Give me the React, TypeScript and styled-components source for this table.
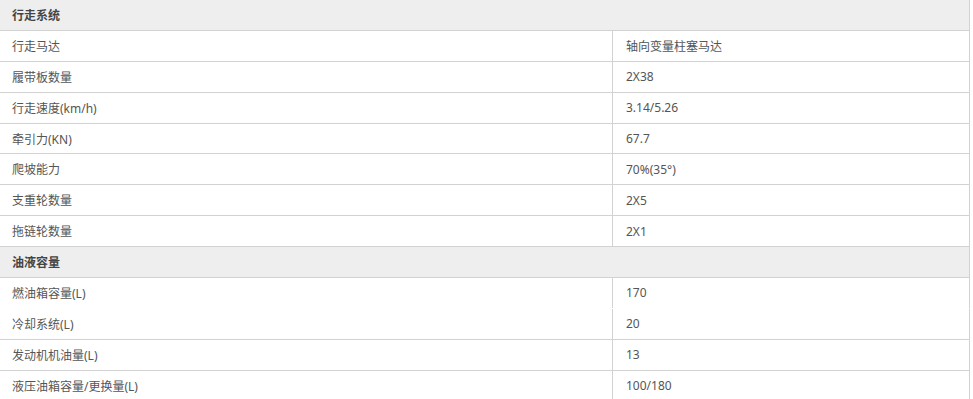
import styled, { createGlobalStyle } from "styled-components";

const GlobalStyle = createGlobalStyle`
  html, body {
    margin: 0;
    padding: 0;
    background: #fff;
  }
`;

interface SpecRow {
  label: string;
  value: string;
  noBorder?: boolean;
}

interface SpecSection {
  title: string;
  rows: SpecRow[];
}

const sections: SpecSection[] = [
  {
    title: "行走系统",
    rows: [
      { label: "行走马达", value: "轴向变量柱塞马达" },
      { label: "履带板数量", value: "2X38" },
      { label: "行走速度(km/h)", value: "3.14/5.26" },
      { label: "牵引力(KN)", value: "67.7" },
      { label: "爬坡能力", value: "70%(35°)" },
      { label: "支重轮数量", value: "2X5" },
      { label: "拖链轮数量", value: "2X1" },
    ],
  },
  {
    title: "油液容量",
    rows: [
      { label: "燃油箱容量(L)", value: "170", noBorder: true },
      { label: "冷却系统(L)", value: "20" },
      { label: "发动机机油量(L)", value: "13" },
      { label: "液压油箱容量/更换量(L)", value: "100/180" },
    ],
  },
];

const Table = styled.div`
  width: 970px;
  font-family: "Noto Sans", "Noto Sans CJK SC", sans-serif;
  font-size: 12px;
  color: #555;
`;

const Row = styled.div<{ $noBorder?: boolean }>`
  display: grid;
  grid-template-columns: 613px 1fr;
  height: 30.9px;
  box-sizing: border-box;
  border-right: 1px solid #d2d2d2;
  border-bottom: 1px solid ${(p) => (p.$noBorder ? "transparent" : "#d2d2d2")};
`;

const SectionRow = styled.div`
  display: flex;
  align-items: center;
  height: 30.9px;
  box-sizing: border-box;
  padding-left: 12px;
  background: #eeeeee;
  border-right: 1px solid #d2d2d2;
  border-bottom: 1px solid #d2d2d2;
  font-weight: bold;
  color: #444;
`;

const Cell = styled.div<{ $divider?: boolean }>`
  display: flex;
  align-items: center;
  padding-left: ${(p) => (p.$divider ? "12px" : "13px")};
  border-right: ${(p) => (p.$divider ? "1px solid #d2d2d2" : "none")};
  white-space: nowrap;
`;

export default function App() {
  return (
    <>
      <GlobalStyle />
      <Table>
        {sections.map((section) => (
          <div key={section.title}>
            <SectionRow>{section.title}</SectionRow>
            {section.rows.map((row) => (
              <Row key={row.label} $noBorder={row.noBorder}>
                <Cell $divider>{row.label}</Cell>
                <Cell>{row.value}</Cell>
              </Row>
            ))}
          </div>
        ))}
      </Table>
    </>
  );
}
